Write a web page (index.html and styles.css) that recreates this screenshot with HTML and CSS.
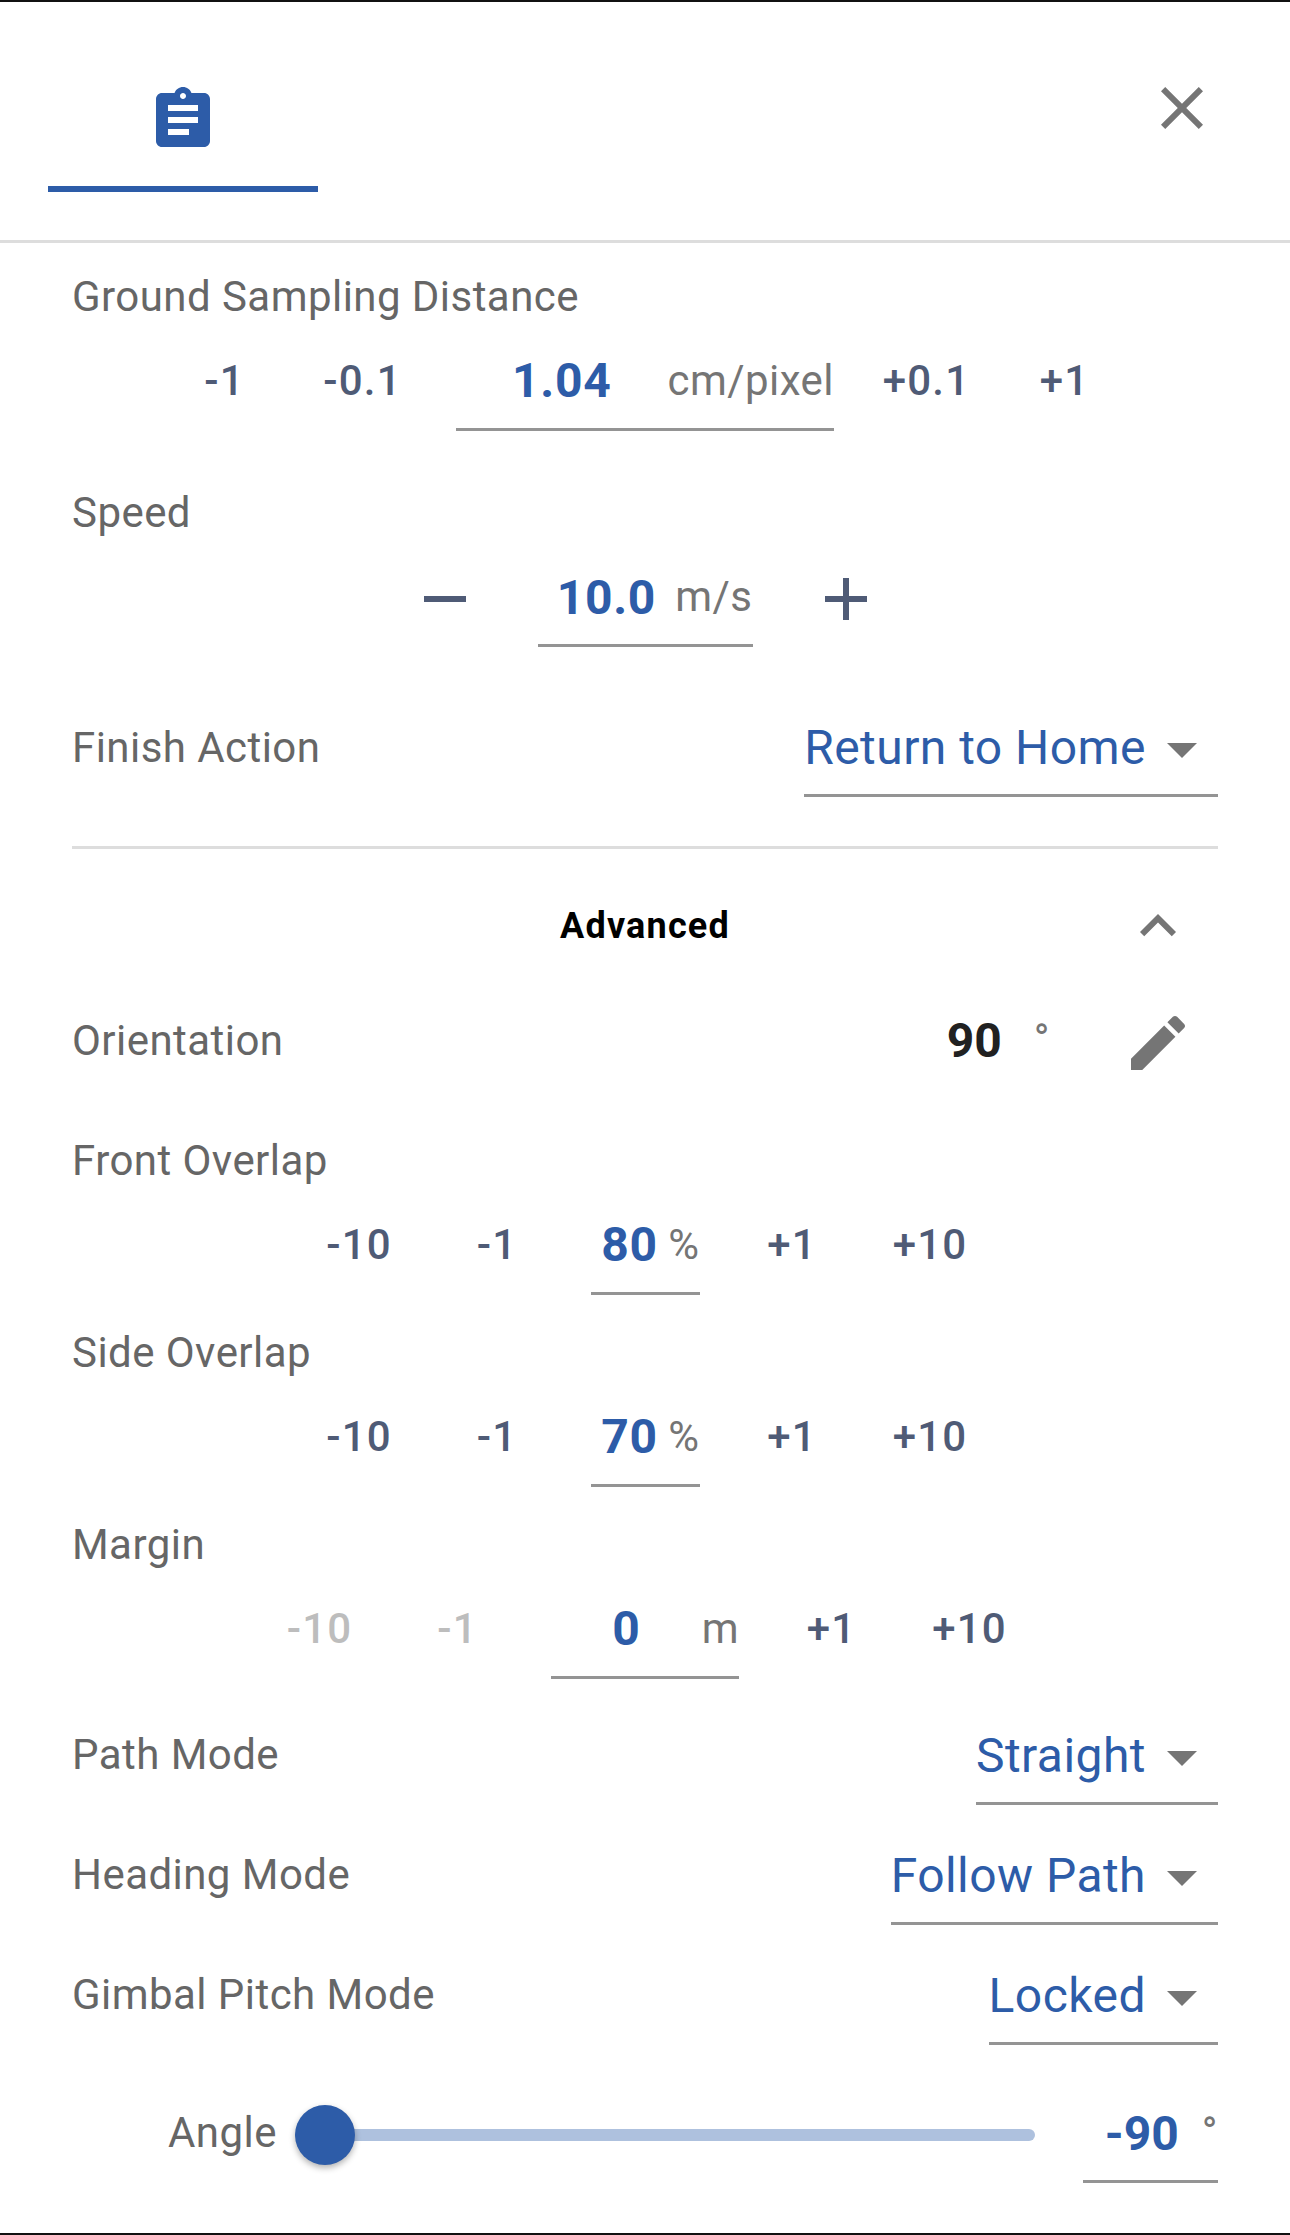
FILE: index.html
```html
<!DOCTYPE html>
<html lang="en">
<head>
<meta charset="utf-8">
<title>Mission settings</title>
<link rel="stylesheet" href="styles.css">
</head>
<body>
<div class="screen">
  <header class="header">
    <div class="tab">
      <svg class="icon icon-blue" viewBox="0 0 24 24"><path d="M19 3h-4.18C14.4 1.84 13.3 1 12 1c-1.3 0-2.4.84-2.82 2H5c-1.1 0-2 .9-2 2v14c0 1.1.9 2 2 2h14c1.1 0 2-.9 2-2V5c0-1.1-.9-2-2-2zm-7 0c.55 0 1 .45 1 1s-.45 1-1 1-1-.45-1-1 .45-1 1-1zm2 14H7v-2h7v2zm3-4H7v-2h10v2zm0-4H7V7h10v2z"/></svg>
    </div>
    <svg class="icon icon-grey close" viewBox="0 0 24 24"><path d="M19 6.41L17.59 5 12 10.59 6.41 5 5 6.41 10.59 12 5 17.59 6.41 19 12 13.41 17.59 19 19 17.59 13.41 12z"/></svg>
  </header>

  <main class="content">
    <div class="label first">Ground Sampling Distance</div>
    <div class="stepper">
      <span class="btn">-1</span><span class="btn">-0.1</span>
      <div class="input w-gsd"><span class="val">1.04</span><span class="unit">cm/pixel</span></div>
      <span class="btn">+0.1</span><span class="btn">+1</span>
    </div>

    <div class="label speed">Speed</div>
    <div class="stepper stepper-speed">
      <svg class="icon icon-slate" viewBox="0 0 24 24"><path d="M19 13H5v-2h14v2z"/></svg>
      <div class="input w-speed"><span class="val">10.0</span><span class="unit">m/s</span></div>
      <svg class="icon icon-slate" viewBox="0 0 24 24"><path d="M19 13h-6v6h-2v-6H5v-2h6V5h2v6h6v2z"/></svg>
    </div>

    <div class="row finish">
      <span class="label">Finish Action</span>
      <div class="select"><span>Return to Home</span><svg class="icon icon-grey" viewBox="0 0 24 24"><path d="M7 10l5 5 5-5z"/></svg></div>
    </div>

    <hr class="divider">

    <div class="advanced">
      <span class="advanced-title">Advanced</span>
      <svg class="icon icon-grey chevron" viewBox="0 0 24 24"><path d="M12 8l-6 6 1.41 1.41L12 10.83l4.59 4.58L18 14z"/></svg>
    </div>

    <div class="row orientation">
      <span class="label">Orientation</span>
      <div class="orient-value">
        <span class="strong">90</span><span class="unit degree">°</span>
        <svg class="icon icon-grey pencil" viewBox="0 0 24 24"><path d="M3 17.25V21h3.75L17.81 9.94l-3.75-3.75L3 17.25zM20.71 7.04c.39-.39.39-1.02 0-1.41l-2.34-2.34c-.39-.39-1.02-.39-1.41 0l-1.83 1.83 3.75 3.75 1.83-1.83z"/></svg>
      </div>
    </div>

    <div class="label front">Front Overlap</div>
    <div class="stepper">
      <span class="btn">-10</span><span class="btn">-1</span>
      <div class="input w-pct"><span class="val">80</span><span class="unit">%</span></div>
      <span class="btn">+1</span><span class="btn">+10</span>
    </div>

    <div class="label next">Side Overlap</div>
    <div class="stepper">
      <span class="btn">-10</span><span class="btn">-1</span>
      <div class="input w-pct"><span class="val">70</span><span class="unit">%</span></div>
      <span class="btn">+1</span><span class="btn">+10</span>
    </div>

    <div class="label next">Margin</div>
    <div class="stepper">
      <span class="btn off">-10</span><span class="btn off">-1</span>
      <div class="input w-margin"><span class="val">0</span><span class="unit">m</span></div>
      <span class="btn">+1</span><span class="btn">+10</span>
    </div>

    <div class="row mode first-mode">
      <span class="label">Path Mode</span>
      <div class="select"><span>Straight</span><svg class="icon icon-grey" viewBox="0 0 24 24"><path d="M7 10l5 5 5-5z"/></svg></div>
    </div>
    <div class="row mode">
      <span class="label">Heading Mode</span>
      <div class="select"><span>Follow Path</span><svg class="icon icon-grey" viewBox="0 0 24 24"><path d="M7 10l5 5 5-5z"/></svg></div>
    </div>
    <div class="row mode">
      <span class="label">Gimbal Pitch Mode</span>
      <div class="select"><span>Locked</span><svg class="icon icon-grey" viewBox="0 0 24 24"><path d="M7 10l5 5 5-5z"/></svg></div>
    </div>

    <div class="angle">
      <span class="label angle-label">Angle</span>
      <div class="slider"><div class="track"></div><div class="thumb"></div></div>
      <div class="input w-angle"><span class="val">-90</span><span class="unit degree-small">°</span></div>
    </div>
  </main>
</div>
</body>
</html>
```
FILE: styles.css
```css
* { box-sizing: border-box; }
html, body { margin: 0; padding: 0; background: #fff; }
body { font-family: Roboto, "Liberation Sans", sans-serif; }

.screen {
  width: 1290px;
  height: 2235px;
  overflow: hidden;
  border-top: 2px solid #111;
  border-bottom: 2px solid #111;
}

.icon { display: block; width: 72px; height: 72px; flex: none; fill: currentColor; }
.icon-blue { color: #2d5ca8; }
.icon-grey { color: #757575; }
.icon-slate { color: #4f5b76; }

.header {
  height: 241px;
  border-bottom: 3px solid #ddd;
  display: flex;
  justify-content: space-between;
  align-items: flex-start;
}
.tab {
  width: 270px;
  margin-left: 48px;
  padding-top: 82px;
  padding-bottom: 30px;
  border-bottom: 6px solid #2d5ca8;
  display: flex;
  justify-content: center;
}
.close { margin-top: 70px; margin-right: 72px; }

.content { padding: 0 72px; }

.label {
  font-size: 42px;
  line-height: 62px;
  color: #666;
  letter-spacing: .45px;
}
.label.first { margin-top: 23px; }
.label.speed { margin-top: 51px; }
.label.front { margin-top: 60px; }
.label.next { margin-top: 27px; }

.stepper {
  margin-top: 23px;
  display: flex;
  justify-content: center;
  align-items: flex-start;
}
.btn {
  width: 138px;
  padding-right: 1px;
  font-size: 42px;
  line-height: 60px;
  font-weight: 500;
  color: #4f5b76;
  letter-spacing: 1.2px;
  text-align: center;
}
.btn.off { color: #bdbdbd; }

.input {
  display: flex;
  align-items: flex-start;
  height: 80px;
  margin: 0 24px;
  border-bottom: 3px solid #949494;
}
.w-gsd { width: 378px; }
.w-pct { width: 109px; }
.w-margin { width: 188px; }
.w-speed { width: 215px; }
.val {
  flex: 1;
  text-align: center;
  font-size: 48px;
  line-height: 60px;
  font-weight: 700;
  color: #2d5ca8;
  letter-spacing: .7px;
}
.unit {
  font-size: 42px;
  line-height: 60px;
  color: #757575;
  letter-spacing: .45px;
}

.stepper-speed .icon { margin-top: -4px; }
.stepper-speed .input { margin: 0 57px; }
.stepper-speed .val { line-height: 62px; }

.row {
  display: flex;
  justify-content: space-between;
  align-items: flex-start;
}
.finish { margin-top: 70px; }
.select {
  display: flex;
  align-items: flex-start;
  height: 80px;
  border-bottom: 3px solid #949494;
  font-size: 48px;
  line-height: 62px;
  color: #2d5ca8;
  letter-spacing: .45px;
}
.select .icon { margin-top: -4px; }

.divider {
  margin: 49px 0 0;
  height: 3px;
  border: 0;
  background: #ddd;
}

.advanced {
  margin-top: 41px;
  height: 72px;
  display: flex;
  justify-content: center;
  position: relative;
}
.advanced-title {
  font-size: 36px;
  line-height: 72px;
  font-weight: 700;
  color: #000;
  letter-spacing: 1.2px;
}
.chevron { position: absolute; right: 24px; top: 0; }

.orientation { margin-top: 48px; height: 60px; }
.orient-value { display: flex; align-items: flex-start; margin-right: 24px; }
.strong {
  font-size: 48px;
  line-height: 60px;
  font-weight: 700;
  color: #212121;
  margin-top: 1px;
}
.degree { margin-left: 32px; }
.pencil { margin-left: 72px; margin-top: -3px; }

.first-mode.mode { margin-top: 45px; }
.mode { margin-top: 39px; }
.mode .select { margin-top: 1px; }

.angle {
  margin-top: 56px;
  display: flex;
  align-items: flex-start;
}
.angle-label { width: 107px; margin-left: 96px; line-height: 64px; }
.slider {
  position: relative;
  width: 740px;
  height: 60px;
  margin: 4px 0 0 20px;
  flex: none;
}
.track {
  margin-top: 24px;
  height: 12px;
  border-radius: 6px;
  background: #aec1de;
}
.thumb {
  position: absolute;
  left: 0;
  top: 0;
  width: 60px;
  height: 60px;
  border-radius: 50%;
  background: #2d5ca8;
  box-shadow: 0 3px 6px rgba(0, 0, 0, .3);
}
.w-angle { width: 135px; margin: 2px 0 0 48px; }
.w-angle .val { text-align: right; letter-spacing: 0; line-height: 62px; }
.degree-small { margin-left: 23px; }
```
